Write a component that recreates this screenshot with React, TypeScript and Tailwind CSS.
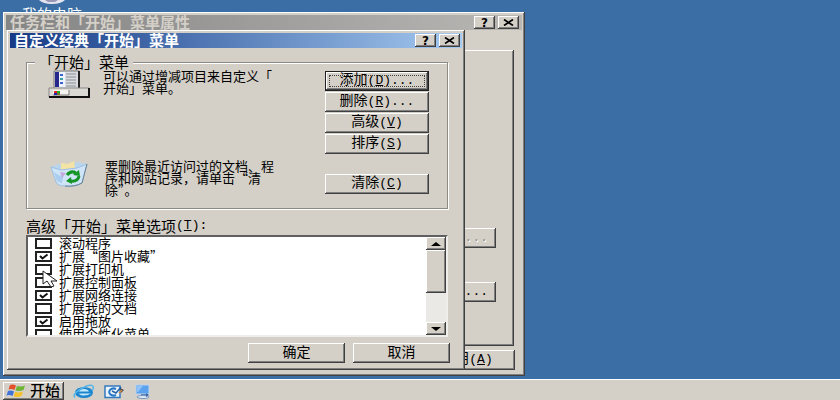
import type { ReactNode } from "react";

const raised =
  "bg-[#d4d0c8] shadow-[inset_-1px_-1px_#404040,inset_1px_1px_#fff,inset_-2px_-2px_#808080]";
const focusRing =
  "bg-[#d4d0c8] border border-[#202020] shadow-[inset_-1px_-1px_#404040,inset_1px_1px_#fff,inset_-2px_-2px_#808080]";

function Key({ k, dots = false }: { k: string; dots?: boolean }) {
  return (
    <span className="font-['Liberation_Mono',monospace] text-[13px]">
      (<span className="underline">{k}</span>){dots && "..."}
    </span>
  );
}

function PushButton({
  children,
  width = "w-26",
  focused = false,
}: {
  children: ReactNode;
  width?: string;
  focused?: boolean;
}) {
  return (
    <button
      type="button"
      className={`relative flex h-5 shrink-0 items-center justify-center whitespace-nowrap pb-1 text-sm leading-4 ${width} ${focused ? focusRing : raised}`}
    >
      <span>{children}</span>
      {focused && <span className="absolute inset-[3px] border border-dotted border-[#404040]" />}
    </button>
  );
}

function CaptionButtons() {
  return (
    <div className="mt-px flex gap-[3px]">
      <button
        type="button"
        aria-label="帮助"
        className={`flex h-[13px] w-[21px] items-center justify-center font-['DejaVu_Sans',sans-serif] text-xs font-bold leading-3 text-black ${raised}`}
      >
        ?
      </button>
      <button
        type="button"
        aria-label="关闭"
        className={`flex h-[13px] w-[21px] items-center justify-center ${raised}`}
      >
        <svg width="11" height="7" viewBox="0 0 11 7" stroke="#000" strokeWidth="1.7">
          <path d="M1 .5l9 6M10 .5l-9 6" />
        </svg>
      </button>
    </div>
  );
}

function StartMenuIcon() {
  return (
    <svg width="42" height="28" viewBox="0 0 42 28" className="shrink-0">
      <path d="M6 1h25v18H6z" fill="#d8dce0" stroke="#777" />
      <path d="M31 1v18" stroke="#222" strokeWidth="2" />
      <path d="M7 2h4v15H7z" fill="#26268c" />
      <path d="M11 2h6v15h-6z" fill="#eef4ff" />
      <path d="M12 4h3v2h-3zM12 12h3v2h-3z" fill="#3c62d0" />
      <path d="M12 8h3v2h-3z" fill="#39a0a0" />
      <path d="M18 4h10M18 7h10M18 10h10M18 13h10M18 16h10" stroke="#8b8f95" />
      <path d="M1 18h40v9H1z" fill="#dcdad5" stroke="#888" />
      <path d="M1 27h40V18" fill="none" stroke="#111" strokeWidth="2" />
      <path d="M5 20h16v5H5z" fill="#f4f4f0" />
      <path d="M21 20v5H5" fill="none" stroke="#777" />
      <path d="M6 21h3v2H6z" fill="#d22" />
      <path d="M9 21h3v2H9z" fill="#2a2" />
      <path d="M6 23h3v2H6z" fill="#22a" />
      <path d="M9 23h3v2H9z" fill="#773" />
    </svg>
  );
}

function RecycleIcon() {
  return (
    <svg width="42" height="28" viewBox="0 0 42 28" className="shrink-0">
      <path d="M3 7l8-3 9 2 9-4 10 2-5 19q-7 4-17 3-7 0-9-4z" fill="#b9d5ee" />
      <path d="M13 3l7 1 6-3 1 7-14 2z" fill="#f3e3a4" />
      <path d="M3 7l10 3 16-2 10-4-5 19q-7 4-17 3-7 0-9-4z" fill="#cfe5f7" stroke="#9cc0e2" />
      <path d="M6 12l6 4 4-4-2 11q-5-1-6-4z" fill="#aacdf0" />
      <path d="M12 12l6 1-4 5z" fill="#c7a9dc" />
      <path d="M39 4l-5 19q-7 4-17 3" fill="none" stroke="#667f91" />
      <path d="M19 15q4-5 9-2M31 16q-1 6-9 5" fill="none" stroke="#159426" strokeWidth="3" />
      <path d="M31 10l1 6-7-1zM23 17l1 7-6-3z" fill="#159426" />
    </svg>
  );
}

function WindowsFlag() {
  return (
    <svg width="20" height="13" viewBox="0 0 20 13" className="shrink-0">
      <path d="M4 1q3-1 6 .5L8.500 6q-3-1.500-6-.5z" fill="#e2512a" />
      <path d="M11 2q4 1 8-.5L17.500 6q-4 1.500-8 .5z" fill="#6fb534" />
      <path d="M2 7q3-1 6 .5L6.500 12q-3-1.500-6-.5z" fill="#3f73d8" />
      <path d="M9 8q4 1 8-.5L15.500 12q-4 1.500-8 .5z" fill="#f5c02c" />
    </svg>
  );
}

function ExplorerIcon() {
  return (
    <svg width="22" height="15" viewBox="0 0 22 15">
      <ellipse cx="11" cy="8.500" rx="9" ry="5.500" fill="#1c86cf" />
      <path d="M6 7.500q1-2.500 5-2.500t5 2.500zM6 9.500h12q-3 2-7 2t-5-2z" fill="#c6e8f8" />
      <path d="M2 13.500q-3-3 5-8t12-4q3 2 0 5" fill="none" stroke="#54b6e8" strokeWidth="1.500" />
    </svg>
  );
}

function OutlookIcon() {
  return (
    <svg width="22" height="15" viewBox="0 0 22 15">
      <path d="M2 2h15v11.500H2z" fill="#eaf4fd" stroke="#3479bd" strokeWidth="1.500" />
      <path d="M13 5a4.500 3.500 0 1 0 0 6" fill="none" stroke="#2878c6" strokeWidth="2" />
      <path d="M9 7l4 2 5-6" fill="none" stroke="#2464ac" strokeWidth="1.500" />
      <path d="M17 4l4 2-3 3z" fill="#3a4250" />
      <path d="M16 9l3-3" stroke="#d98b37" strokeWidth="1.500" />
    </svg>
  );
}

function ShowDesktopIcon() {
  return (
    <svg width="18" height="15" viewBox="0 0 18 15">
      <path d="M3 1h13v9H3z" fill="#5aa1ee" stroke="#bcd5ee" />
      <path d="M4 2h6l-5 6H4z" fill="#8fc4fa" />
      <path d="M8 10h5v2H8z" fill="#6288b8" />
      <ellipse cx="10" cy="13" rx="6" ry="1.500" fill="#dceafa" stroke="#7796bc" />
      <path d="M13 9l3 2-3 2z" fill="#3c63a8" />
    </svg>
  );
}

const options = [
  { label: "滚动程序", on: false },
  { label: "扩展“图片收藏”", on: true },
  { label: "扩展打印机", on: false },
  { label: "扩展控制面板", on: false },
  { label: "扩展网络连接", on: true },
  { label: "扩展我的文档", on: false },
  { label: "启用拖放", on: true },
  { label: "使用个性化菜单", on: false },
];

function OptionRow({ label, on }: { label: string; on: boolean }) {
  return (
    <label className="flex h-[13px] shrink-0 items-center gap-[7px] text-[13px] leading-[13px]">
      <span className="relative flex h-[11px] w-[17px]">
        <input
          type="checkbox"
          defaultChecked={on}
          className="peer h-full w-full appearance-none border-2 border-[#222] bg-white"
        />
        <svg
          viewBox="0 0 17 11"
          className="pointer-events-none absolute inset-0 hidden peer-checked:block"
          fill="none"
          stroke="#111"
          strokeWidth="2"
        >
          <path d="M5 5l2.500 2.500L12.500 3.500" />
        </svg>
      </span>
      <span className="pb-0.5">{label}</span>
    </label>
  );
}

function ScrollBar() {
  return (
    <div className="flex w-5 flex-col bg-[#ebe9e5]">
      <button type="button" aria-label="向上滚动" className={`flex h-[13px] items-center justify-center ${raised}`}>
        <svg width="10" height="4" viewBox="0 0 10 4"><path d="M0 4l5-4 5 4z" /></svg>
      </button>
      <div className={`h-[43px] ${raised}`} />
      <button type="button" aria-label="向下滚动" className={`mt-auto flex h-[13px] items-center justify-center ${raised}`}>
        <svg width="10" height="4" viewBox="0 0 10 4"><path d="M0 0l5 4 5-4z" /></svg>
      </button>
    </div>
  );
}

function PropertiesWindow() {
  return (
    <section className={`absolute left-[3px] top-3 flex h-[364px] w-[522px] flex-col p-[3px] ${raised}`}>
      <header className="flex h-[15px] items-start justify-between bg-linear-to-r from-[#858585] to-[#b9b7b4] pl-1 pr-[3px]">
        <h1 className="text-[15px] font-bold leading-[13px] text-[#d4d0c8]">任务栏和「开始」菜单属性</h1>
        <CaptionButtons />
      </header>
      <div className={`ml-1 mr-2 mt-5 flex flex-1 flex-col items-end gap-[34px] pr-[18px] pt-[178px] ${raised}`}>
        <button
          type="button"
          disabled
          aria-label="自定义"
          className={`flex h-5 w-26 items-center justify-end pr-2 font-['Liberation_Mono',monospace] text-[13px] text-[#909090] [text-shadow:1px_1px_#fff] ${raised}`}
        >
          ...
        </button>
        <button
          type="button"
          aria-label="清除列表"
          className={`flex h-5 w-26 items-center justify-end pr-2 font-['Liberation_Mono',monospace] text-[13px] ${raised}`}
        >
          ...
        </button>
      </div>
      <footer className="mb-[3px] mr-[7px] mt-1 flex justify-end">
        <PushButton width="w-24">
          应用<Key k="A" />
        </PushButton>
      </footer>
    </section>
  );
}

function CustomizeWindow() {
  return (
    <section className={`absolute left-[7px] top-[30px] flex w-[458px] flex-col p-[3px] ${raised}`}>
      <header className="flex h-[15px] items-start justify-between bg-linear-to-r from-[#173a86] to-[#a6caf0] pl-1 pr-[2px]">
        <h2 className="text-[15px] font-bold leading-[13px] text-white">自定义经典「开始」菜单</h2>
        <CaptionButtons />
      </header>

      <div className="flex flex-col pl-4 pr-3.5 pt-1.5">
        <fieldset className="min-w-0 border border-[#8c8a85] pb-3 pl-[21px] pr-[18px] shadow-[1px_1px_#fff,inset_1px_1px_#fff]">
          <legend className="-ml-[13px] bg-[#d4d0c8] px-1 text-[15px] leading-4">「开始」菜单</legend>
          <div className="flex items-start">
            <StartMenuIcon />
            <p className="ml-[13px] flex-1 whitespace-nowrap text-[13px] leading-3">
              可以通过增减项目来自定义「<br />开始」菜单。
            </p>
            <div className="mt-px flex flex-col gap-px">
              <PushButton focused>添加<Key k="D" dots /></PushButton>
              <PushButton>删除<Key k="R" dots /></PushButton>
              <PushButton>高级<Key k="V" /></PushButton>
              <PushButton>排序<Key k="S" /></PushButton>
            </div>
          </div>
          <div className="mt-1.5 flex items-start">
            <RecycleIcon />
            <p className="ml-[15px] flex-1 whitespace-nowrap text-[13px] leading-3">
              要删除最近访问过的文档、程<br />序和网站记录，请单击“清<br />除”。
            </p>
            <div className="pt-3.5">
              <PushButton>清除<Key k="C" /></PushButton>
            </div>
          </div>
        </fieldset>

        <h3 id="options-label" className="mt-[9px] flex h-4 items-center text-[15px] leading-4">
          <span>高级「开始」菜单选项</span>
          <Key k="T" />
          <span className="font-['Liberation_Mono',monospace] text-[13px]">:</span>
        </h3>
        <div
          role="group"
          aria-labelledby="options-label"
          className="mt-px flex h-[102px] border-2 border-b-[#efeeea] border-l-[#606060] border-r-[#efeeea] border-t-[#606060] bg-white"
        >
          <div className="flex flex-1 flex-col overflow-hidden pl-[7px]">
            {options.map((o) => (
              <OptionRow key={o.label} {...o} />
            ))}
          </div>
          <ScrollBar />
        </div>
      </div>

      <footer className="flex justify-end gap-2 pb-1 pr-3 pt-1.5">
        <PushButton width="w-[97px]">确定</PushButton>
        <PushButton width="w-[97px]">取消</PushButton>
      </footer>
    </section>
  );
}

export default function App() {
  return (
    <div
      lang="zh-CN"
      className="flex h-screen flex-col overflow-hidden bg-[#3a6ea5] font-['Noto_Sans_CJK_SC',sans-serif] text-black"
    >
      <main className="relative flex-1 overflow-hidden">
        <div className="absolute left-5 top-0 flex w-16 flex-col items-center text-white">
          <svg width="26" height="4" viewBox="0 0 26 4">
            <path d="M0 0h26q-4 4-13 4T0 0z" fill="#e4e4ee" />
            <path d="M6 0h13l-3 2H9z" fill="#9796b4" />
          </svg>
          <span className="mt-0.5 text-[15px] leading-4">我的电脑</span>
        </div>
        <PropertiesWindow />
        <CustomizeWindow />
        <svg width="18" height="18" viewBox="0 0 18 18" className="pointer-events-none absolute left-[42px] top-[270px]">
          <path d="M1 1v13l4-3 4 6 3-1-3-5h6z" fill="#fff" stroke="#222" />
        </svg>
      </main>

      <nav className="flex h-[21px] items-start border-t border-white bg-[#d4d0c8] pl-[3px] pt-0.5">
        <button
          type="button"
          className={`flex h-[18px] w-[61px] items-center gap-1 pb-0.5 pl-[3px] text-[15px] font-medium leading-4 ${raised}`}
        >
          <WindowsFlag />
          <span className="whitespace-nowrap">开始</span>
        </button>
        <div className="ml-[9px] mt-0.5 flex gap-2">
          <button type="button" aria-label="Internet Explorer"><ExplorerIcon /></button>
          <button type="button" aria-label="Outlook Express"><OutlookIcon /></button>
          <button type="button" aria-label="显示桌面"><ShowDesktopIcon /></button>
        </div>
      </nav>
    </div>
  );
}
